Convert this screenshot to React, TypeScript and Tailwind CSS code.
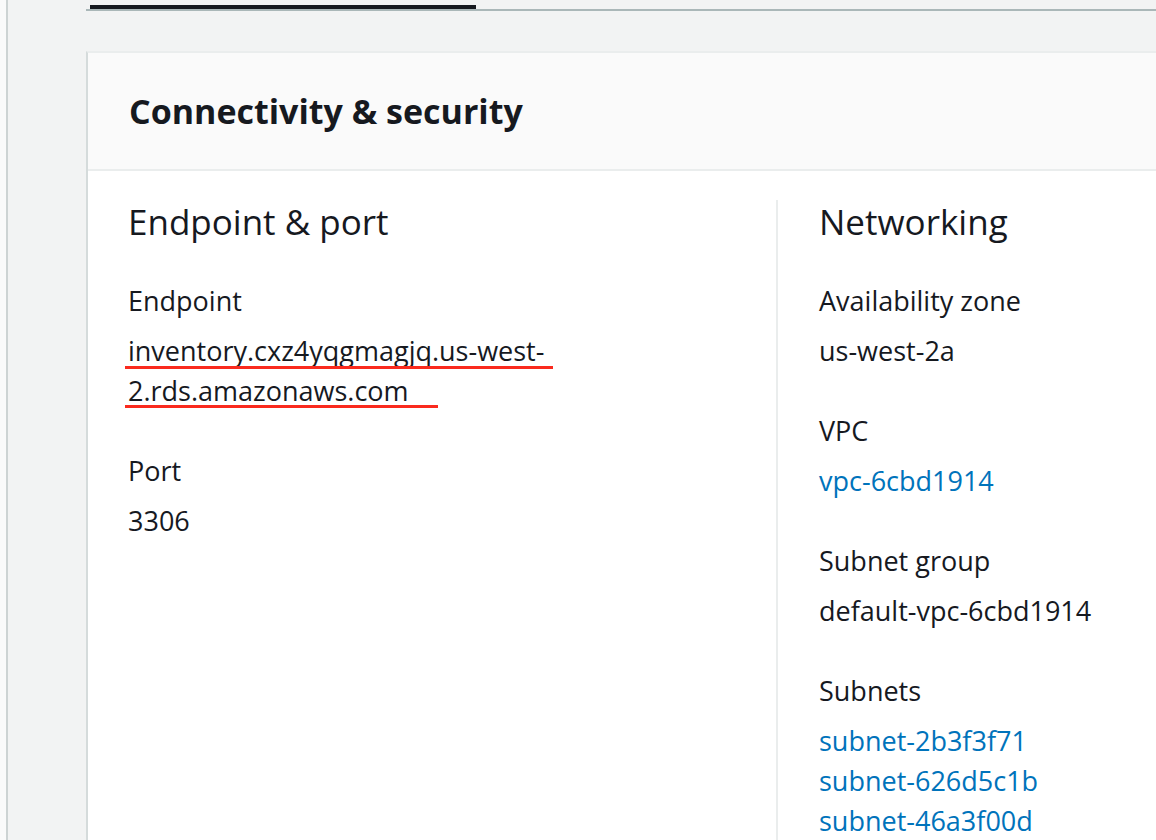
import React from "react";

function Field({
  label,
  children,
  first,
}: {
  label: string;
  children: React.ReactNode;
  first?: boolean;
}) {
  return (
    <div className={first ? "mt-[37px]" : "mt-[40px]"}>
      <div className="text-[27px] leading-[40px]">{label}</div>
      <div className="mt-[10px] text-[27px] leading-[40px]">{children}</div>
    </div>
  );
}

export default function App() {
  return (
    <div className="w-[1156px] h-[840px] overflow-hidden bg-[#f2f3f3] flex font-['Open_Sans','Noto_Sans',sans-serif] font-medium text-[#16191f]">
      <div className="w-[8px] shrink-0 bg-[#fafafa] border-r-2 border-[#cdd3d3]" />
      <div className="flex-1 min-w-0 pl-[78px]">
        {/* tab bar */}
        <div className="h-[11px] pt-[5px] border-b-2 border-[#aab7b8] w-[1100px]">
          <div className="ml-[4px] w-[386px] h-[4px] bg-[#16191f]" />
        </div>

        {/* card */}
        <div className="mt-[40px] w-[1100px] h-[800px] bg-white border-t-2 border-t-[#eaeded] border-l-2 border-l-[#d5dbdb]">
          <div className="h-[118px] bg-[#fafafa] border-b-2 border-[#eaeded] flex items-center pl-[41px]">
            <h2 className="text-[34px] font-bold leading-[44px]">Connectivity &amp; security</h2>
          </div>
          <div className="pt-[29px] flex h-full">
            <div className="w-[688px] shrink-0 pl-[40px]">
              <h3 className="text-[35px] leading-[44px]">Endpoint &amp; port</h3>
              <div className="mt-[37px]">
                <div className="text-[27px] leading-[40px]">Endpoint</div>
                <div className="relative mt-[10px] text-[27px] leading-[40px]">
                  <div>inventory.cxz4yqgmagjq.us-west-</div>
                  <div>2.rds.amazonaws.com</div>
                  <div className="absolute left-[-3px] top-[35px] w-[428px] h-[3px] bg-[#fa2a1e]" />
                  <div className="absolute left-[-3px] top-[74px] w-[313px] h-[3px] bg-[#fa2a1e]" />
                </div>
              </div>
              <Field label="Port">3306</Field>
            </div>
            <div className="flex-1 border-l-2 border-[#eaeded] pl-[41px]">
              <h3 className="text-[35px] leading-[44px]">Networking</h3>
              <Field label="Availability zone" first>
                us-west-2a
              </Field>
              <Field label="VPC">
                <span className="text-[#0073bb]">vpc-6cbd1914</span>
              </Field>
              <Field label="Subnet group">default-vpc-6cbd1914</Field>
              <Field label="Subnets">
                <div className="text-[#0073bb]">subnet-2b3f3f71</div>
                <div className="text-[#0073bb]">subnet-626d5c1b</div>
                <div className="text-[#0073bb]">subnet-46a3f00d</div>
              </Field>
            </div>
          </div>
        </div>
      </div>
    </div>
  );
}
